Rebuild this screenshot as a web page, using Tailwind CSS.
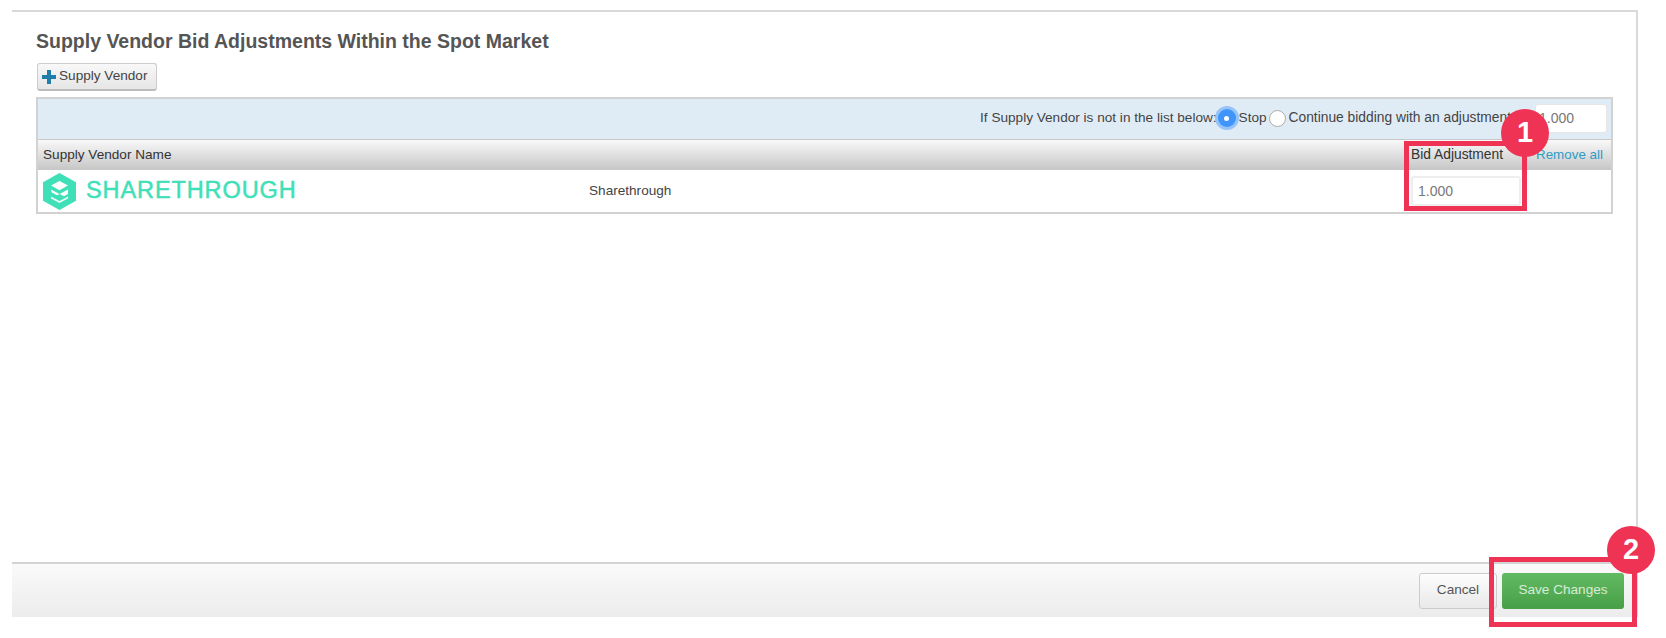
<!DOCTYPE html>
<html lang="en">
  <head>
    <meta charset="UTF-8" />
    <meta name="viewport" content="width=device-width, initial-scale=1.0" />
    <title>Supply Vendor Bid Adjustments</title>
    <script src="https://cdn.jsdelivr.net/npm/@tailwindcss/browser@4"></script>
  </head>
  <body class="bg-white font-['Liberation_Sans',Arial,sans-serif] text-[13.6px] text-[#444]">
    <div class="relative w-[1666px] h-[638px] overflow-hidden pt-[10px] pl-[12px]">
      <div class="w-[1626px] h-[607px] flex flex-col border-t-2 border-r-2 border-[#d9d9d9]">
        <div class="flex-1 pl-[24px] pt-[17px]">
          <h2 class="text-[19.5px] leading-[24px] font-bold text-[#555]">Supply Vendor Bid Adjustments Within the Spot Market</h2>

          <button class="mt-[10px] ml-px w-[120px] h-[28px] flex items-center gap-[3px] pl-[4px] rounded-[3px] border border-[#ccc] border-b-2 border-b-[#bbb] bg-gradient-to-b from-[#f8f8f8] to-[#e6e6e6] text-[#444]">
            <svg class="w-[14px] h-[14px]" viewBox="0 0 14 14"><path d="M5 0h4v5h5v4H9v5H5V9H0V5h5z" fill="#1f7fa8" /></svg>
            Supply Vendor
          </button>

          <div class="mt-[6px] w-[1577px] border-2 border-[#d2d2d2]">
            <div class="h-[41px] flex items-center justify-end pr-[4px] pb-[2px] bg-[#e0ecf5] border-b border-[#c8c8c8]">
              <span>If Supply Vendor is not in the list below:</span>
              <span class="ml-[1px] w-[18px] h-[18px] rounded-full bg-[#3f95fb] shadow-[0_0_0_3px_rgba(63,149,251,0.45)] flex items-center justify-center">
                <span class="w-[5px] h-[5px] rounded-full bg-white"></span>
              </span>
              <span class="ml-[3px]">Stop</span>
              <span class="ml-[2px] w-[17px] h-[17px] rounded-full bg-white border border-[#aaa]"></span>
              <span class="ml-[3px] text-[13.8px]">Continue bidding with an adjustment</span>
              <input class="ml-[24px] w-[72px] h-[29px] px-[3px] rounded-[3px] border border-[#e6e6e6] bg-white text-[14px] text-[#777]" value="1.000" />
            </div>

            <div class="h-[30px] grid grid-cols-[552px_822px_126px_1fr] items-center bg-gradient-to-b from-[#f9f9f9] to-[#c6c6c6]">
              <span class="pl-[5px] text-[#333]">Supply Vendor Name</span>
              <span></span>
              <span class="-ml-[1px] text-[13.8px] text-[#333]">Bid Adjustment</span>
              <a href="#" class="-ml-[2px] text-[13.4px] text-[#2f9cc4]">Remove all</a>
            </div>

            <div class="h-[42px] grid grid-cols-[552px_822px_126px_1fr] items-center bg-white">
              <div class="flex items-center pl-[5px] gap-[10px]">
                <svg class="w-[33px] h-[37px]" viewBox="0 0 33 37">
                  <path d="M16.5 0L33 9.2v18.6L16.5 37 0 27.8V9.2z" fill="#3fe0b8" />
                  <path d="M16.5 8l8.5 4.6-8.5 4.6-8.5-4.6z" fill="#fff" />
                  <path d="M8 16.5l8.5 4.6 8.5-4.6v4.5l-4 2.2-4.5-2.2-2.5 1.3-5.500-3z" fill="#fff" />
                  <path d="M8 23.500l8.500 4.600 8.500-4.600v2l-8.500 4.600-8.500-4.600z" fill="#fff" opacity="0.9" />
                </svg>
                <span class="text-[23.5px] leading-none tracking-[0.9px] text-[#3fe0b8] [-webkit-text-stroke:0.5px_#3fe0b8]">SHARETHROUGH</span>
              </div>
              <span class="-ml-[1px]">Sharethrough</span>
              <input class="-ml-[1px] w-[110px] h-[30px] px-[5px] rounded-[3px] border-2 border-[#eee] bg-white text-[14px] text-[#777]" value="1.000" />
              <span></span>
            </div>
          </div>
        </div>

        <div class="h-[55px] flex items-center justify-end gap-[5px] pr-[12px] border-t-2 border-[#d4d4d4] bg-gradient-to-b from-[#fafafa] to-[#ececec]">
          <button class="w-[78px] h-[36px] rounded-[3px] border border-[#ccc] bg-gradient-to-b from-[#fdfdfd] to-[#e9e9e9] text-[#555]">Cancel</button>
          <button class="w-[122px] h-[36px] rounded-[3px] bg-gradient-to-b from-[#62bb62] to-[#479f47] text-[#d8ecd8]">Save Changes</button>
        </div>
      </div>

      <!-- callouts over the screenshot -->
      <div class="absolute left-[1404px] top-[141px] w-[123px] h-[70px] border-[5px] border-[#ee3355]"></div>
      <div class="absolute left-[1501px] top-[109px] w-[48px] h-[48px] rounded-full bg-[#ee3355] flex items-center justify-center text-white text-[29px] font-bold">1</div>
      <div class="absolute left-[1489px] top-[557px] w-[148px] h-[70px] border-[5px] border-[#ee3355]"></div>
      <div class="absolute left-[1607px] top-[526px] w-[48px] h-[48px] rounded-full bg-[#ee3355] flex items-center justify-center text-white text-[29px] font-bold">2</div>
    </div>
  </body>
</html>
